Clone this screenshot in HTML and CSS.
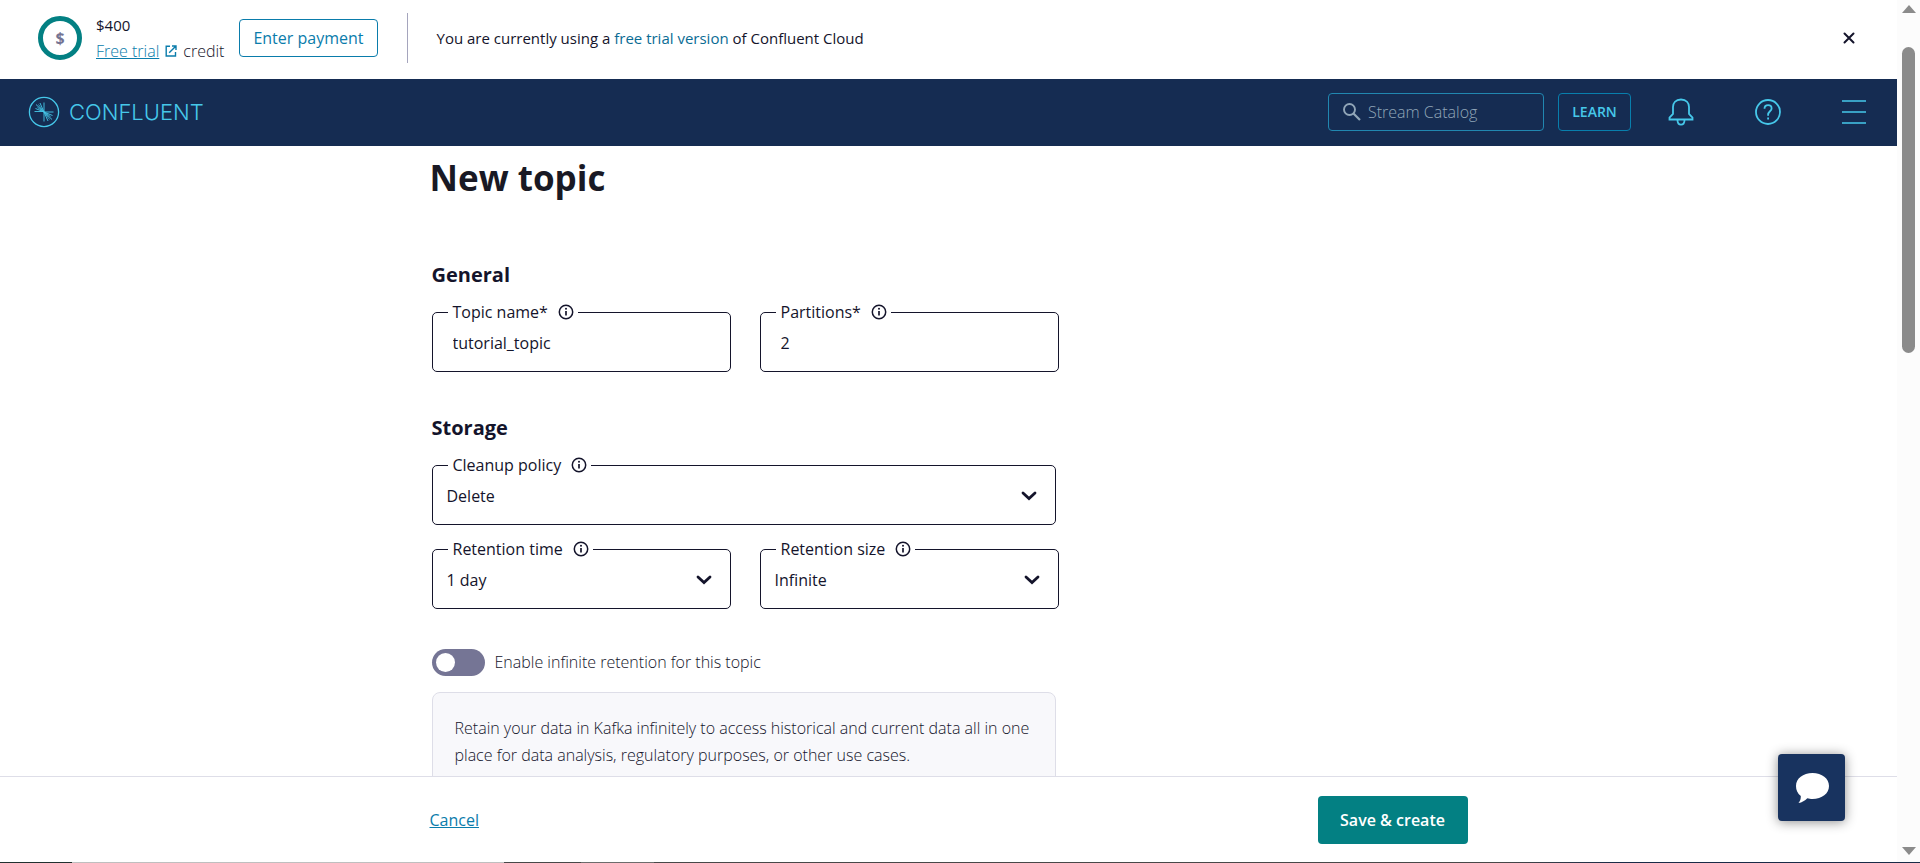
FILE: index.html
```html
<!DOCTYPE html>
<html lang="en">
<head>
<meta charset="utf-8">
<title>New topic</title>
<link rel="stylesheet" href="styles.css">
</head>
<body>
<svg class="defs" aria-hidden="true">
  <symbol id="info" viewBox="0 0 16 16"><circle cx="8" cy="8" r="6.7" fill="none" stroke="currentColor" stroke-width="1.5"/><path d="M8 7v4.6" stroke="currentColor" stroke-width="1.7"/><circle cx="8" cy="4.7" r="1" fill="currentColor"/></symbol>
  <symbol id="chevron" viewBox="0 0 16 10"><path d="M2 2l6 5.6L14 2" fill="none" stroke="currentColor" stroke-width="2.8" stroke-linecap="round"/></symbol>
</svg>
<div class="app">
  <header class="banner">
    <svg class="ring" viewBox="0 0 44 44" aria-hidden="true"><circle cx="22" cy="22" r="19.5" fill="none" stroke="#038083" stroke-width="5"/><text x="22" y="28" text-anchor="middle">$</text></svg>
    <div class="credit">
      <div class="amount">$400</div>
      <div class="credit-line"><a href="#">Free trial</a><svg class="external" viewBox="0 0 12 12" aria-hidden="true"><path d="M5 1.2H1.2v9.8h9.3V7M7 1h4v4M11 1L4.2 7.8" fill="none" stroke="currentColor" stroke-width="1.4"/></svg><span>credit</span></div>
    </div>
    <button class="payment" type="button">Enter payment</button>
    <p class="message">You are currently using a <a href="#">free trial version</a> of Confluent Cloud</p>
    <button class="icon-button close" type="button" aria-label="Close"><svg viewBox="0 0 12 12"><path d="M1.5 1.5l9 9M10.5 1.5l-9 9" stroke="currentColor" stroke-width="2" stroke-linecap="round"/></svg></button>
  </header>
  <nav class="nav">
    <a class="brand" href="#">
      <svg viewBox="0 0 32 32" aria-hidden="true" fill="none" stroke="currentColor">
        <circle cx="16" cy="16" r="14.6" stroke-width="1.3"/>
        <path stroke-width=".9" d="M6.500 15.500H16M16 16L7.500 12.500M16 16L8 8.500M16 16L12 7M16 6.500V25.500M16 16H25.500M16 16l8.500 3.500M16 16l8 7.500M16 16l4 9"/>
        <path stroke-width=".9" d="M9.500 11.500l5 3.500M10.500 8.500l4 5.500M22.500 20.500l-5-3.500M21.500 23.500l-4-5.500" opacity=".8"/>
      </svg>
      <span>CONFLUENT</span>
    </a>
    <div class="nav-tools">
      <label class="search">
        <svg viewBox="0 0 20 20" aria-hidden="true"><circle cx="7.500" cy="7.500" r="5.500" fill="none" stroke="currentColor" stroke-width="1.900"/><path d="M11.500 11.500l6.500 6.500" stroke="currentColor" stroke-width="2.200"/></svg>
        <input type="text" placeholder="Stream Catalog" aria-label="Stream Catalog">
      </label>
      <button class="learn" type="button">LEARN</button>
      <div class="nav-icons">
        <button class="icon-button" type="button" aria-label="Notifications"><svg class="bell" viewBox="0 0 26 28" fill="none" stroke="currentColor" stroke-width="1.800"><path d="M1.500 21.500v-2L5 16V9c0-4 2.500-7.500 8-7.500S21 5 21 9v7l3.500 3.500v2z"/><path d="M9.500 22c0 3 1.500 4.700 3.500 4.700s3.500-1.700 3.500-4.700"/></svg></button>
        <button class="icon-button" type="button" aria-label="Help"><svg class="help" viewBox="0 0 26 26" fill="none" stroke="currentColor" stroke-width="1.800"><circle cx="13" cy="13" r="12"/><path d="M9.500 9.700c0-2.200 1.500-3.500 3.600-3.500s3.500 1.400 3.500 3.200c0 2.800-3.500 3-3.500 6.300v1M13.100 18.500v2"/></svg></button>
        <button class="icon-button" type="button" aria-label="Menu"><svg class="menu" viewBox="0 0 24 24" stroke="currentColor" stroke-width="1.600"><path d="M0 1h24M0 12h24M0 23h24"/></svg></button>
      </div>
    </div>
  </nav>
  <main class="main">
    <div class="page">
      <h1>New topic</h1>
      <form class="form">
        <h2>General</h2>
        <div class="pair">
          <fieldset class="field text-field"><legend><label for="name">Topic name*</label><svg class="info"><use href="#info"/></svg></legend><input id="name" type="text" value="tutorial_topic"></fieldset>
          <fieldset class="field text-field"><legend><label for="parts">Partitions*</label><svg class="info"><use href="#info"/></svg></legend><input id="parts" type="text" value="2"></fieldset>
        </div>
        <h2 class="storage">Storage</h2>
        <fieldset class="field wide"><legend><label for="policy">Cleanup policy</label><svg class="info"><use href="#info"/></svg></legend><select id="policy"><option>Delete</option></select><svg class="chevron"><use href="#chevron"/></svg></fieldset>
        <div class="pair">
          <fieldset class="field"><legend><label for="time">Retention time</label><svg class="info"><use href="#info"/></svg></legend><select id="time"><option>1 day</option></select><svg class="chevron"><use href="#chevron"/></svg></fieldset>
          <fieldset class="field"><legend><label for="size">Retention size</label><svg class="info"><use href="#info"/></svg></legend><select id="size"><option>Infinite</option></select><svg class="chevron"><use href="#chevron"/></svg></fieldset>
        </div>
        <div class="toggle"><input id="infinite" type="checkbox" role="switch"><label for="infinite">Enable infinite retention for this topic</label></div>
        <div class="note">Retain your data in Kafka infinitely to access historical and current data all in one place for data analysis, regulatory purposes, or other use cases.</div>
      </form>
    </div>
  </main>
  <footer class="footer">
    <div class="footer-inner"><a href="#">Cancel</a><button class="save" type="button">Save &amp; create</button></div>
  </footer>
  <button class="chat" type="button" aria-label="Chat"><svg viewBox="0 0 36 32"><path d="M18.500 1C28 1 35 6.500 35 14s-7 13-16.500 13c-2 0-3.500-.2-5.200-.7C11 28.500 8 30.800 4.500 31c1.600-2 2.400-4 2.300-7C3.500 21.500 2 18 2 14 2 6.500 9 1 18.500 1z" fill="#fff"/></svg></button>
</div>
<div class="scrollbar" aria-hidden="true">
  <svg viewBox="0 0 14 8"><path d="M7 0l7 8H0z" fill="#8b8b8b"/></svg>
  <div class="track"><div class="thumb"></div></div>
  <svg viewBox="0 0 14 8"><path d="M0 0h14L7 8z" fill="#8b8b8b"/></svg>
</div>
<div class="edge"></div>
</body>
</html>
```
FILE: styles.css
```css
* { box-sizing: border-box; }
body {
  margin: 0;
  height: 100vh;
  display: grid;
  grid-template: minmax(0, 1fr) 1px / minmax(0, 1fr) 23px;
  overflow: hidden;
  background: #fff;
  color: #14142b;
  font: 400 16px/24px "Open Sans", "Noto Sans", sans-serif;
}
button, input, select { font: inherit; color: inherit; }
button { cursor: pointer; }
a { color: #0a7cab; }
svg { display: block; flex: none; }
.defs { position: absolute; width: 0; height: 0; }
.app { display: flex; flex-direction: column; min-height: 0; position: relative; }

.banner { display: flex; align-items: center; height: 79px; padding: 0 37px 3px 38px; flex: none; }
.ring { width: 44px; height: 44px; margin-right: 14px; }
.ring text { font-size: 16px; font-weight: 700; fill: #747493; }
.amount { font-size: 15px; font-weight: 500; line-height: 26px; }
.credit-line { display: flex; align-items: center; gap: 6px; font-weight: 300; line-height: 26px; }
.external { width: 12px; height: 12px; color: #0a7cab; }
.payment {
  height: 38px;
  margin-left: 15px;
  padding: 0 13px;
  border: 1px solid #0a7cab;
  border-radius: 4px;
  background: #fff;
  color: #0a7cab;
  font-weight: 500;
}
.message {
  display: flex;
  align-items: center;
  height: 50px;
  margin: 0 0 0 29px;
  padding-left: 29px;
  border-left: 1px solid #a5a5bd;
  font-size: 15px;
  font-weight: 500;
  white-space: pre;
}
.message a { color: #0a6c94; text-decoration: none; }
.icon-button { display: flex; padding: 0; border: 0; background: none; }
.close { margin-left: auto; padding: 5px; }
.close svg { width: 12px; height: 12px; }

.nav {
  display: flex;
  align-items: center;
  justify-content: space-between;
  flex: none;
  height: 67px;
  padding: 0 31px 1px 28px;
  background: #152c52;
  color: #46c8ea;
}
.brand { display: flex; align-items: center; gap: 9px; color: inherit; text-decoration: none; font: 300 22px/24px Inter, sans-serif; }
.brand svg { width: 32px; height: 32px; }
.nav-tools { display: flex; align-items: center; gap: 14px; }
.search { display: flex; align-items: center; gap: 6px; width: 216px; height: 38px; padding: 0 13px; border: 1px solid #2187b0; border-radius: 4px; color: #91a6b8; }
.search svg { width: 20px; height: 20px; }
.search input { flex: 1; min-width: 0; padding: 0; border: 0; background: none; outline: 0; font-weight: 300; }
.search input::placeholder { color: #91a6b8; opacity: 1; }
.learn { width: 73px; height: 38px; padding: 0; border: 1px solid #087fad; border-radius: 4px; background: none; color: #46c8ea; font-size: 14px; font-weight: 600; }
.nav-icons { display: flex; align-items: center; gap: 61px; padding-left: 23px; }
.bell { width: 26px; height: 28px; }
.help { width: 26px; height: 26px; }
.menu { width: 24px; height: 24px; }

.main { flex: 1; min-height: 0; overflow: hidden; }
.page, .footer-inner { width: 100%; max-width: 1038px; margin: 0 auto; }
h1 { margin: 7px 0 59px; font-size: 35px; line-height: 50px; font-weight: 700; color: #191924; }
.form { max-width: 629px; padding-left: 2px; }
h2 { margin: 0 0 12px; font-size: 20px; line-height: 26px; font-weight: 700; }
.pair { display: grid; grid-template-columns: 1fr 1fr; gap: 29px; }
.field { display: grid; height: 72px; min-width: 0; margin: 0; padding: 0; border: 1px solid #14142b; border-radius: 5px; }
.field legend { display: flex; align-items: center; gap: 10px; margin-left: 15px; padding: 0 4px 0 5px; }
.info { width: 16px; height: 16px; }
.field input, .field select {
  grid-area: 1 / 1;
  width: 100%;
  height: 38px;
  padding: 0 14px;
  border: 0;
  outline: 0;
  background: none;
  appearance: none;
}
.field.text-field input { padding: 0 20px; }
.chevron { grid-area: 1 / 1; justify-self: end; width: 16px; height: 10px; margin: 14px 18px 0 0; pointer-events: none; }
.storage { margin: 43px 0 12px; }
.wide { max-width: 624px; margin-bottom: 12px; }
.toggle { display: flex; align-items: center; gap: 10px; margin: 40px 0 16px; font-weight: 300; line-height: 27px; }
.toggle input { display: flex; align-items: center; width: 53px; height: 27px; margin: 0; padding: 0 4px; border-radius: 14px; background: #757595; appearance: none; }
.toggle input::before { content: ""; width: 19px; height: 19px; border-radius: 50%; background: #fff; }
.note { max-width: 624px; padding: 22px; border: 1px solid #dedee8; border-radius: 8px; background: #f8f8fb; font-weight: 300; line-height: 27px; }

.footer { flex: none; padding: 19px 0 18px; border-top: 1px solid #dedee8; background: #fff; }
.footer-inner { display: flex; align-items: center; justify-content: space-between; }
.save { width: 150px; height: 48px; padding: 0; border: 0; border-radius: 4px; background: #038083; color: #fff; font-weight: 600; }
.chat {
  position: absolute;
  right: 52px;
  bottom: 41px;
  display: flex;
  align-items: center;
  justify-content: center;
  width: 67px;
  height: 67px;
  padding: 0;
  border: 0;
  border-radius: 4px;
  background: #18335f;
  box-shadow: 0 1px 12px rgba(0, 0, 0, .45);
}
.chat svg { width: 36px; height: 32px; }

.scrollbar { display: flex; flex-direction: column; align-items: center; gap: 34px; padding: 5px 0 7px; background: #fcfcfc; }
.scrollbar svg { width: 14px; height: 8px; }
.track { flex: 1; }
.thumb { width: 13px; height: 40%; border-radius: 7px; background: #8b8b8b; }
.edge { grid-column: 1 / -1; background: linear-gradient(90deg, #21302f 72px, #bfbfbf 72px 504px, #484848 504px 581px, #6c6c6c 581px 654px, #484848 654px 1500px, #192b47 1620px); }
```
